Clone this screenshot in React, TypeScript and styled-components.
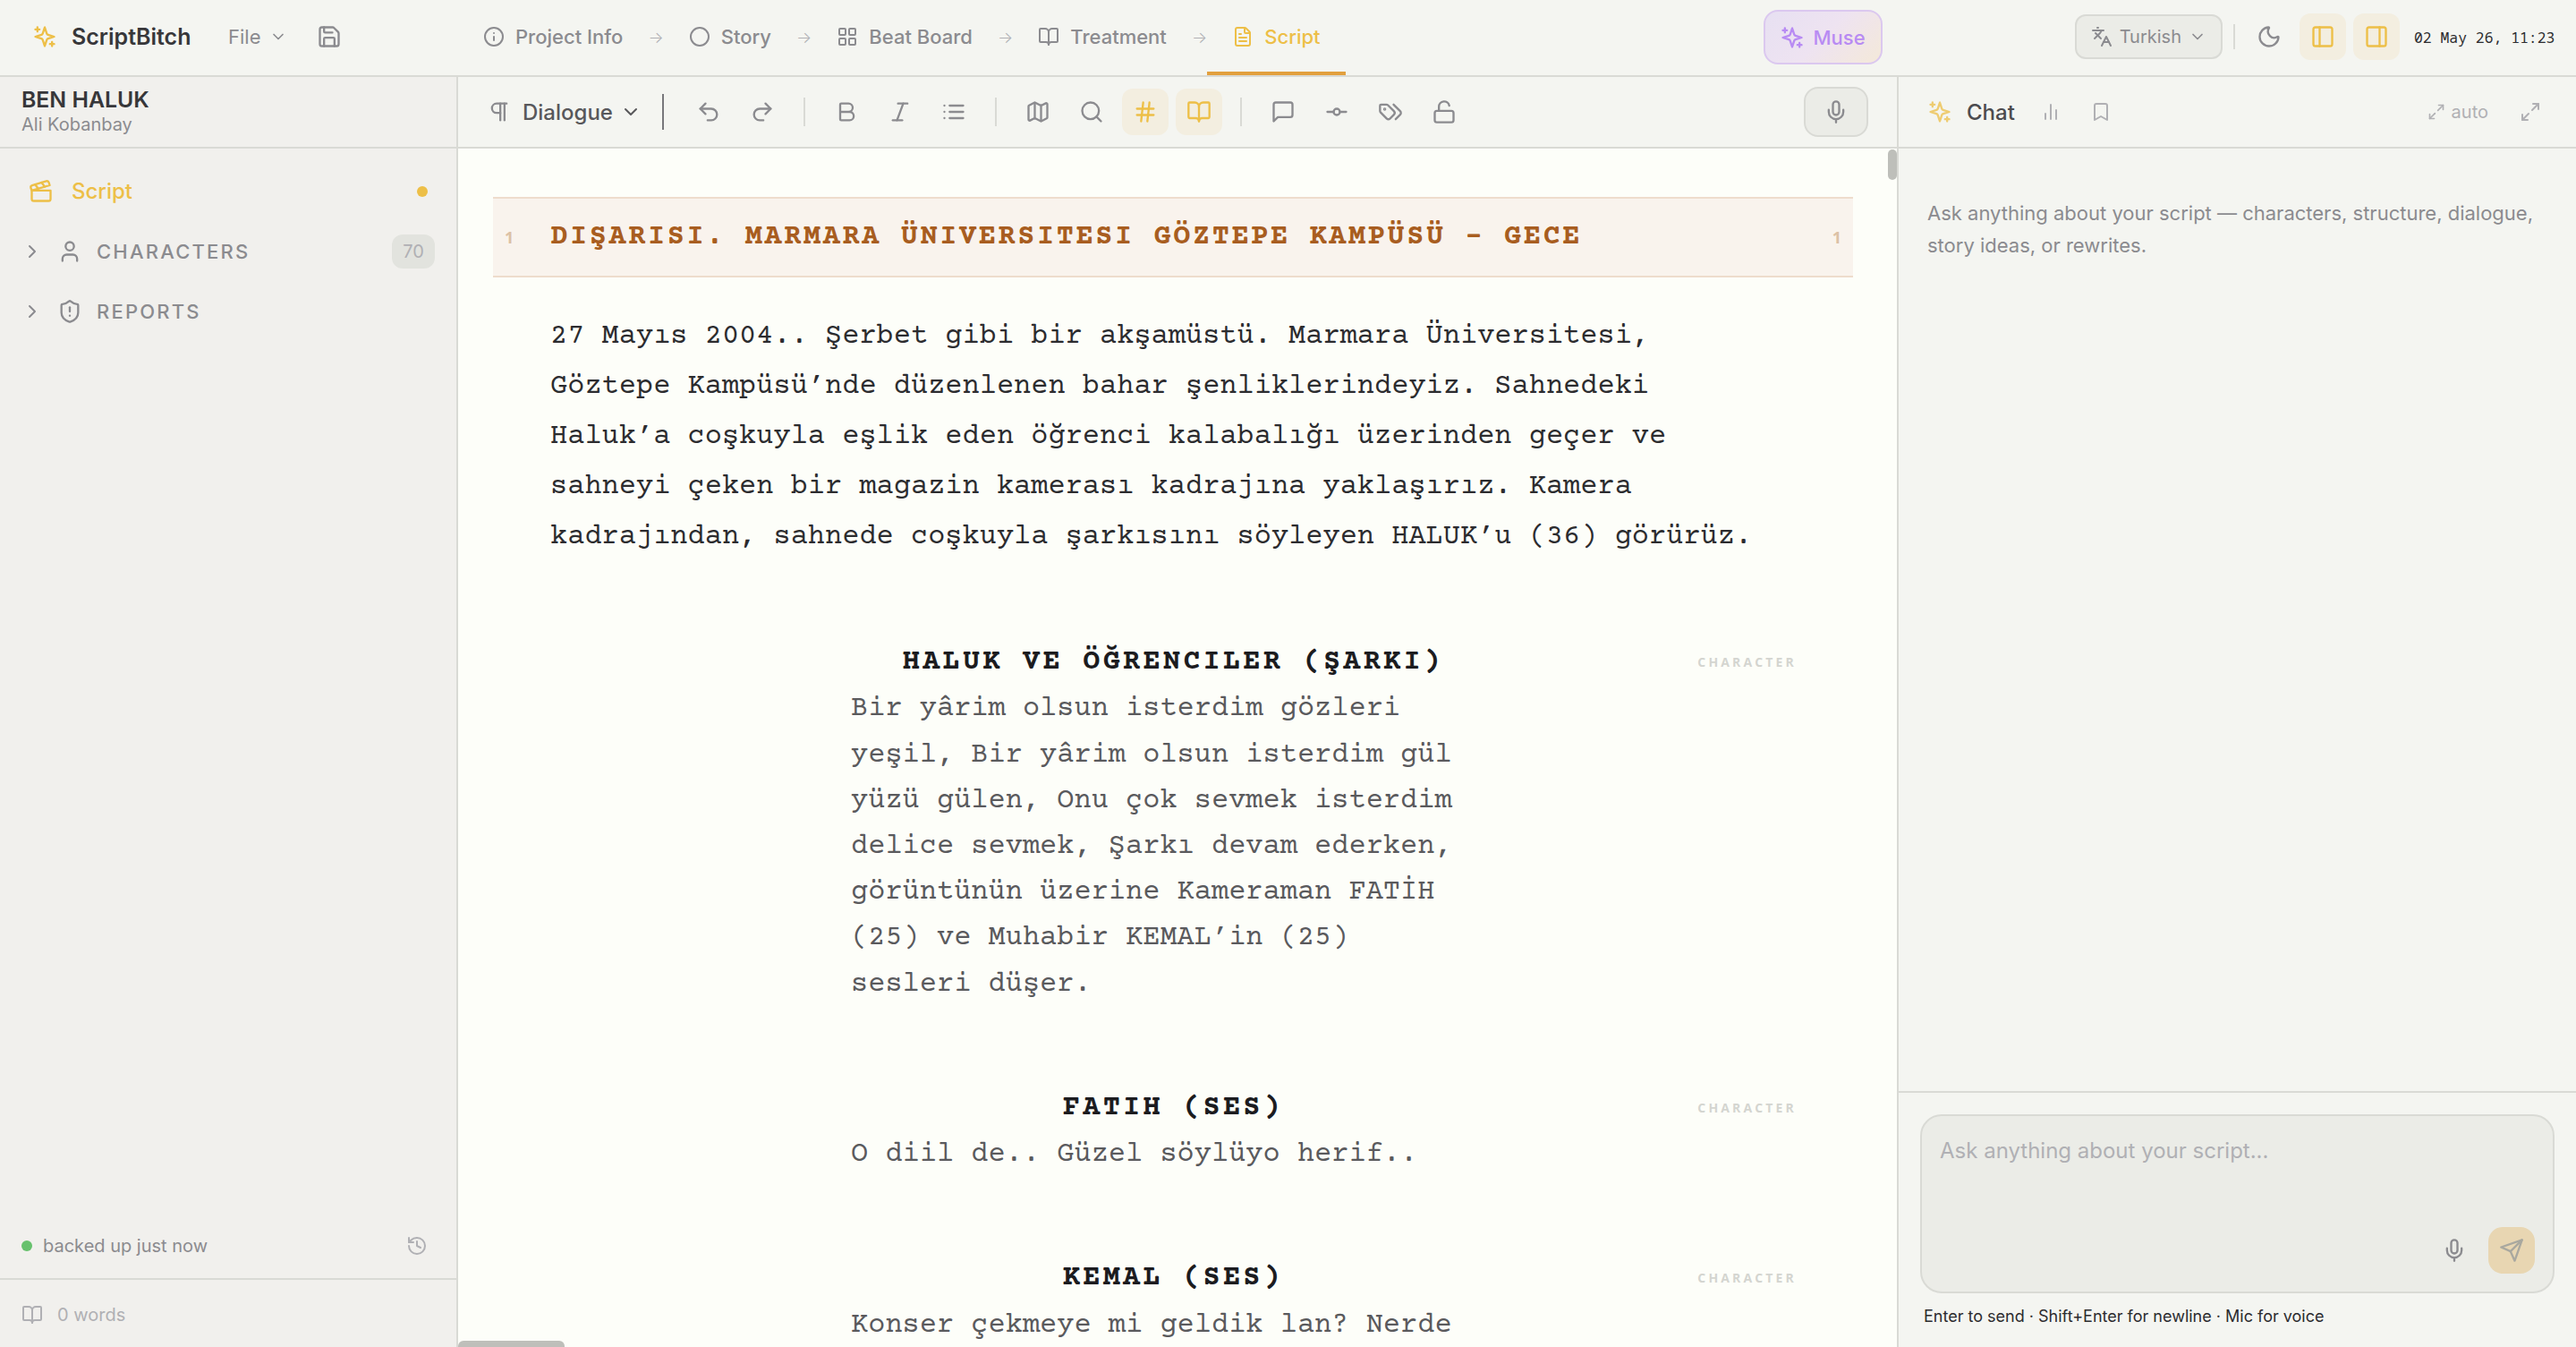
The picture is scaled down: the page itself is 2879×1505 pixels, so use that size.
import React from 'react';
import styled, { createGlobalStyle, css } from 'styled-components';
import {
  BookOpen, Bold, ChevronDown, ChevronRight, Circle, Clapperboard, FileText, Hash, History, Info, Italic,
  Languages, LayoutGrid, LockOpen, Map as MapIcon, Maximize2, Mic, Moon, PanelLeft, PanelRight, Pilcrow,
  Redo2, Save, Search, ShieldAlert, Undo2, User,
} from 'lucide-react';

const c = {
  bar: '#f4f5f1',
  side: '#f1f0ed',
  page: '#fdfef9',
  line: '#d9dad5',
  field: '#ebece7',
  ink: '#37373a',
  mid: '#58585b',
  muted: '#8b8b8f',
  faint: '#b0b0b4',
  gold: '#edbf47',
  goldBg: '#f3eee0',
};

const Global = createGlobalStyle`
  *, *::before, *::after { box-sizing: border-box; }
  html, body { margin: 0; height: 100%; overflow: hidden; }
  body { font-family: Inter, "Open Sans", sans-serif; color: ${c.muted}; background: ${c.bar}; }
  svg { display: block; flex: none; }
`;

/* ---------- icons ---------- */

const Svg = ({ size = 28, children }: { size?: number; children: React.ReactNode }) => (
  <svg width={size} height={size} viewBox="0 0 24 24" fill="none" stroke="currentColor" strokeWidth={2}
    strokeLinecap="round" strokeLinejoin="round">{children}</svg>
);
const Sparkles = ({ size }: { size?: number }) => (
  <Svg size={size}>
    <path d="m12 3-1.912 5.813a2 2 0 0 1-1.275 1.275L3 12l5.813 1.912a2 2 0 0 1 1.275 1.275L12 21l1.912-5.813a2 2 0 0 1 1.275-1.275L21 12l-5.813-1.912a2 2 0 0 1-1.275-1.275L12 3Z" />
    <path d="M5 3v4M19 17v4M3 5h4M17 19h4" />
  </Svg>
);
const ListIcon = () => <Svg><path d="M8 6h13M8 12h13M8 18h13M3 6h.01M3 12h.01M3 18h.01" /></Svg>;
const Comment = () => <Svg><path d="M21 15a2 2 0 0 1-2 2H7l-4 4V5a2 2 0 0 1 2-2h14a2 2 0 0 1 2 2z" /></Svg>;
const Commit = () => <Svg><circle cx="12" cy="12" r="3" /><path d="M3 12h6M15 12h6" /></Svg>;
const TagsIcon = () => (
  <Svg>
    <path d="m15 5 6.3 6.3a2.4 2.4 0 0 1 0 3.4L17 19" />
    <path d="M9.586 5.586A2 2 0 0 0 8.172 5H3a1 1 0 0 0-1 1v5.172a2 2 0 0 0 .586 1.414L8.29 18.29a2.426 2.426 0 0 0 3.42 0l3.58-3.58a2.426 2.426 0 0 0 0-3.42z" />
    <circle cx="6.5" cy="9.5" r=".5" fill="currentColor" />
  </Svg>
);
const Bars = () => <Svg size={24}><path d="M18 20V10M12 20V4M6 20v-6" /></Svg>;
const BookmarkIcon = () => <Svg size={24}><path d="m19 21-7-4-7 4V5a2 2 0 0 1 2-2h10a2 2 0 0 1 2 2v16z" /></Svg>;
const SendIcon = () => <Svg><path d="m22 2-7 20-4-9-9-4Z" /><path d="M22 2 11 13" /></Svg>;

/* ---------- shell ---------- */

const Shell = styled.div`
  width: 100vw;
  height: 100vh;
  display: grid;
  grid-template-rows: 86px minmax(0, 1fr);
  overflow: hidden;
`;
const Body = styled.div`
  display: grid;
  grid-template-columns: 512px minmax(0, 1fr) 759px;
  min-height: 0;
`;

/* ---------- top bar ---------- */

const TopBar = styled.header`
  display: flex;
  align-items: stretch;
  background: ${c.bar};
  border-bottom: 2px solid ${c.line};
  padding-right: 23px;
`;
const BrandArea = styled.div`
  width: 512px;
  display: flex;
  align-items: center;
  padding: 0 36px 2px;
`;
const Brand = styled.div`
  display: flex;
  align-items: center;
  gap: 16px;
  width: 219px;
  font-size: 25px;
  font-weight: 600;
  color: ${c.ink};
  svg { color: ${c.gold}; }
`;
const FileMenu = styled.div`
  display: flex;
  align-items: center;
  gap: 10px;
  width: 99px;
  font-size: 22px;
`;
const Nav = styled.nav`
  display: flex;
  align-items: stretch;
`;
const NavItem = styled.div<{ $active?: boolean }>`
  display: flex;
  align-items: center;
  gap: 12px;
  padding: 2px 28px 0;
  font-size: 22px;
  font-weight: 500;
  color: ${(p) => (p.$active ? c.gold : c.muted)};
  border-bottom: 4px solid ${(p) => (p.$active ? '#e2a03e' : 'transparent')};
`;
const NavArrow = styled.span`
  width: 17.4px;
  display: flex;
  align-items: center;
  justify-content: center;
  padding-bottom: 1px;
  font-size: 18px;
  font-weight: 300;
  color: ${c.faint};
`;
const TopRight = styled.div`
  margin-left: auto;
  display: flex;
  align-items: center;
  padding-bottom: 2px;
`;
const Muse = styled.div`
  display: flex;
  align-items: center;
  align-self: flex-start;
  gap: 10px;
  width: 133px;
  height: 61px;
  margin: 11px 0 0 467px;
  padding: 0 16px;
  border: 2px solid #dbc8ef;
  border-radius: 16px;
  background: linear-gradient(135deg, #e7e0f2 0%, #eee3f1 50%, #f4e9d9 100%);
  color: #b88bf3;
  font-size: 22px;
  font-weight: 500;
`;
const Language = styled.div`
  display: flex;
  align-items: center;
  gap: 8px;
  height: 50px;
  padding: 0 16px;
  border: 2px solid ${c.line};
  border-radius: 12px;
  background: ${c.field};
  font-size: 20px;
`;
const Divider = styled.i<{ $h: number; $m: number; $dark?: boolean }>`
  width: 2px;
  height: ${(p) => p.$h}px;
  margin: 0 ${(p) => p.$m}px;
  background: ${(p) => (p.$dark ? '#77777b' : c.line)};
`;
const Tools = styled.div<{ $first?: boolean }>`
  display: flex;
  align-items: center;
  gap: 8px;
  margin-left: ${(p) => (p.$first ? 24 : 0)}px;
`;
const Tool = styled.span<{ $on?: boolean }>`
  width: 52px;
  height: 52px;
  display: grid;
  place-items: center;
  border-radius: 12px;
  color: ${c.muted};
  ${(p) => p.$on && css`color: ${c.gold}; background: ${c.goldBg};`}
`;
const Clock = styled.time`
  width: 158px;
  margin-left: 16px;
  font-family: Consolas, "Noto Sans Mono", "DejaVu Sans Mono", monospace;
  font-size: 16.4px;
  color: #2c2c2f;
  white-space: pre;
`;

/* ---------- sidebar ---------- */

const Sidebar = styled.aside`
  display: flex;
  flex-direction: column;
  background: ${c.side};
  border-right: 2px solid ${c.line};
  min-height: 0;
`;
const ProjectHead = styled.div`
  height: 80px;
  display: flex;
  flex-direction: column;
  justify-content: center;
  padding: 0 24px;
  border-bottom: 2px solid ${c.line};
  line-height: 28px;
`;
const ProjectTitle = styled.div`
  font-size: 24.8px;
  font-weight: 600;
  color: ${c.ink};
`;
const Author = styled.div`
  font-size: 20px;
`;
const Tree = styled.div`
  flex: 1;
  padding-top: 14px;
`;
const TreeRow = styled.div<{ $active?: boolean }>`
  display: flex;
  align-items: center;
  height: 67.2px;
  gap: 16px;
  padding: 0 24px;
  font-size: 22px;
  font-weight: 500;
  letter-spacing: 0.1em;
  ${(p) => p.$active && css`
    gap: 20px;
    padding: 0 32px;
    font-size: 24px;
    letter-spacing: 0;
    color: ${c.gold};
  `}
`;
const Dot = styled.i<{ $color: string; $end?: boolean }>`
  width: 12px;
  height: 12px;
  border-radius: 50%;
  background: ${(p) => p.$color};
  ${(p) => p.$end && css`margin-left: auto;`}
`;
const Count = styled.span`
  margin-left: auto;
  width: 48px;
  height: 38px;
  display: grid;
  place-items: center;
  border-radius: 12px;
  background: #e2e3de;
  color: ${c.faint};
  font-size: 20px;
  font-weight: 400;
  letter-spacing: 0;
`;
const Backup = styled.div`
  height: 72px;
  display: flex;
  align-items: center;
  gap: 12px;
  padding: 0 32px 0 24px;
  font-size: 20px;
  svg { margin-left: auto; color: ${c.faint}; }
`;
const Words = styled.div`
  height: 77px;
  display: flex;
  align-items: center;
  gap: 16px;
  padding: 3px 24px 0;
  border-top: 2px solid ${c.line};
  font-size: 20px;
  color: ${c.faint};
`;

/* ---------- editor ---------- */

const Editor = styled.main`
  position: relative;
  display: flex;
  flex-direction: column;
  background: ${c.page};
  min-height: 0;
  overflow: hidden;
`;
const Toolbar = styled.div`
  height: 80px;
  flex: none;
  display: flex;
  align-items: center;
  padding: 0 32px;
  background: ${c.bar};
  border-bottom: 2px solid ${c.line};
`;
const BlockType = styled.div`
  display: flex;
  align-items: center;
  width: 196px;
  font-size: 24px;
  font-weight: 500;
  color: ${c.mid};
  svg:first-child { color: ${c.muted}; margin-right: 12px; }
  svg:last-child { margin-left: 8px; }
`;
const MicButton = styled.span`
  width: 72px;
  height: 56px;
  margin-left: auto;
  display: grid;
  place-items: center;
  border: 2px solid ${c.line};
  border-radius: 16px;
  background: ${c.field};
`;
const Page = styled.div`
  flex: none;
  width: 1520px;
  margin: 54px 0 0 39px;
  font-family: "Courier Prime", "Liberation Mono", monospace;
  font-size: 32px;
`;
const Scene = styled.div`
  height: 90px;
  display: flex;
  align-items: baseline;
  padding: 15px 13px;
  border: solid #eedccc;
  border-width: 2px 0;
  background: #f9f3ed;
  line-height: 56px;
  color: #a85d20;
`;
const SceneNo = styled.span`
  font-family: "Open Sans", sans-serif;
  font-size: 18px;
  font-weight: 700;
  line-height: 20px;
  color: #dcc1a6;
`;
const SceneTitle = styled.span`
  flex: 1;
  padding-left: 41px;
  font-weight: 700;
  letter-spacing: 0.08em;
`;
const Action = styled.p`
  width: 1410px;
  margin: 38px 0 0;
  padding: 0 0 0 64px;
  line-height: 56px;
  color: #2c2c2f;
`;
const CharacterRow = styled.div`
  position: relative;
  margin-top: 85px;
  text-align: center;
  font-weight: 700;
  line-height: 54.4px;
  letter-spacing: 0.1em;
  color: #1c1c1f;
`;
const Tag = styled.span`
  position: absolute;
  right: 63px;
  top: 0;
  font-family: "Open Sans", sans-serif;
  font-size: 14px;
  letter-spacing: 3.15px;
  color: #d4d5d0;
`;
const Speech = styled.p`
  margin: 0;
  width: 700px;
  margin-left: 400px;
  line-height: 51.2px;
  color: #5a5a5d;
`;
const ThumbY = styled.i`
  position: absolute;
  top: 81px;
  right: 0;
  width: 10px;
  height: 34px;
  border-radius: 5px;
  background: #bebfba;
`;
const ThumbX = styled.i`
  position: absolute;
  left: 0;
  bottom: -5px;
  width: 119px;
  height: 12px;
  border-radius: 6px;
  background: #bebfba;
`;

/* ---------- chat ---------- */

const Chat = styled.aside`
  display: flex;
  flex-direction: column;
  background: ${c.bar};
  border-left: 2px solid ${c.line};
  min-height: 0;
`;
const ChatHead = styled.div`
  height: 80px;
  display: flex;
  align-items: center;
  padding: 0 39px 0 32px;
  border-bottom: 2px solid ${c.line};
  color: ${c.faint};
`;
const ChatTitle = styled.div`
  display: flex;
  align-items: center;
  gap: 16px;
  margin-right: 28px;
  font-size: 24px;
  font-weight: 500;
  color: #4c4c4f;
  svg { color: ${c.gold}; opacity: 0.75; }
`;
const ChatTabs = styled.div`
  display: flex;
  gap: 32px;
`;
const Auto = styled.div`
  margin: 0 35px 0 auto;
  display: flex;
  align-items: center;
  gap: 7px;
  font-size: 20px;
`;
const Intro = styled.p`
  flex: 1;
  margin: 0;
  padding: 55px 24px 0 32px;
  font-size: 22px;
  line-height: 35.75px;
`;
const Composer = styled.div`
  height: 286px;
  padding: 24px 24px 0;
  border-top: 2px solid ${c.line};
`;
const Input = styled.div`
  height: 200px;
  display: flex;
  flex-direction: column;
  justify-content: space-between;
  padding: 20px;
  border: 2px solid ${c.line};
  border-radius: 24px;
  background: ${c.field};
  font-size: 24px;
  line-height: 38px;
  color: ${c.faint};
`;
const InputActions = styled.div`
  display: flex;
  justify-content: flex-end;
  gap: 12px;
`;
const Send = styled(Tool)`
  border-radius: 16px;
  background: #e8d6b2;
  color: #a9a89f;
`;
const Hint = styled.div`
  padding: 14px 4px 0;
  font-size: 18px;
  line-height: 24px;
  color: #2c2c2f;
`;

/* ---------- data ---------- */

const steps = [
  { label: 'Project Info', Icon: Info },
  { label: 'Story', Icon: Circle },
  { label: 'Beat Board', Icon: LayoutGrid },
  { label: 'Treatment', Icon: BookOpen },
  { label: 'Script', Icon: FileText, active: true },
];

const action = [
  '27 Mayıs 2004.. Şerbet gibi bir akşamüstü. Marmara Üniversitesi,',
  'Göztepe Kampüsü’nde düzenlenen bahar şenliklerindeyiz. Sahnedeki',
  'Haluk’a coşkuyla eşlik eden öğrenci kalabalığı üzerinden geçer ve',
  'sahneyi çeken bir magazin kamerası kadrajına yaklaşırız. Kamera',
  'kadrajından, sahnede coşkuyla şarkısını söyleyen HALUK’u (36) görürüz.',
].join(' ');

const dialogue = [
  {
    who: 'HALUK VE ÖĞRENCILER (ŞARKI)',
    text: 'Bir yârim olsun isterdim gözleri yeşil, Bir yârim olsun isterdim gül yüzü gülen, Onu çok sevmek isterdim delice sevmek, Şarkı devam ederken, görüntünün üzerine Kameraman FATİH (25) ve Muhabir KEMAL’in (25) sesleri düşer.',
  },
  { who: 'FATIH (SES)', text: 'O diil de.. Güzel söylüyo herif..' },
  { who: 'KEMAL (SES)', text: 'Konser çekmeye mi geldik lan? Nerde' },
];

export default function App() {
  return (
    <>
      <Global />
      <Shell>
        <TopBar>
          <BrandArea>
            <Brand><Sparkles />ScriptBitch</Brand>
            <FileMenu>File<ChevronDown size={20} /></FileMenu>
            <Save size={28} />
          </BrandArea>
          <Nav>
            {steps.map(({ label, Icon, active }, i) => (
              <React.Fragment key={label}>
                {i > 0 && <NavArrow>→</NavArrow>}
                <NavItem $active={active}><Icon size={24} />{label}</NavItem>
              </React.Fragment>
            ))}
          </Nav>
          <Muse><Sparkles />Muse</Muse>
          <TopRight>
            <Language><Languages size={24} />Turkish<ChevronDown size={20} /></Language>
            <Divider $h={28} $m={12} />
            <Tools>
              <Tool><Moon size={28} /></Tool>
              <Tool $on><PanelLeft size={28} /></Tool>
              <Tool $on><PanelRight size={28} /></Tool>
            </Tools>
            <Clock>02 May 26, 11:23</Clock>
          </TopRight>
        </TopBar>

        <Body>
          <Sidebar>
            <ProjectHead>
              <ProjectTitle>BEN HALUK</ProjectTitle>
              <Author>Ali Kobanbay</Author>
            </ProjectHead>
            <Tree>
              <TreeRow $active><Clapperboard size={28} />Script<Dot $color={c.gold} $end /></TreeRow>
              <TreeRow><ChevronRight size={24} /><User size={28} />CHARACTERS<Count>70</Count></TreeRow>
              <TreeRow><ChevronRight size={24} /><ShieldAlert size={28} />REPORTS</TreeRow>
            </Tree>
            <Backup><Dot $color="#67c16d" />backed up just now<History size={24} /></Backup>
            <Words><BookOpen size={24} />0 words</Words>
          </Sidebar>

          <Editor>
            <Toolbar>
              <BlockType><Pilcrow size={28} />Dialogue<ChevronDown size={24} /></BlockType>
              <Divider $h={40} $m={0} $dark />
              <Tools $first>
                <Tool><Undo2 size={28} /></Tool>
                <Tool><Redo2 size={28} /></Tool>
              </Tools>
              <Divider $h={32} $m={20} />
              <Tools>
                <Tool><Bold size={28} /></Tool>
                <Tool><Italic size={28} /></Tool>
                <Tool><ListIcon /></Tool>
              </Tools>
              <Divider $h={32} $m={20} />
              <Tools>
                <Tool><MapIcon size={28} /></Tool>
                <Tool><Search size={28} /></Tool>
                <Tool $on><Hash size={28} /></Tool>
                <Tool $on><BookOpen size={28} /></Tool>
              </Tools>
              <Divider $h={32} $m={20} />
              <Tools>
                <Tool><Comment /></Tool>
                <Tool><Commit /></Tool>
                <Tool><TagsIcon /></Tool>
                <Tool><LockOpen size={28} /></Tool>
              </Tools>
              <MicButton><Mic size={28} /></MicButton>
            </Toolbar>
            <Page>
              <Scene>
                <SceneNo>1</SceneNo>
                <SceneTitle>DIŞARISI. MARMARA ÜNIVERSITESI GÖZTEPE KAMPÜSÜ - GECE</SceneTitle>
                <SceneNo>1</SceneNo>
              </Scene>
              <Action>{action}</Action>
              {dialogue.map((d) => (
                <React.Fragment key={d.who}>
                  <CharacterRow>{d.who}<Tag>CHARACTER</Tag></CharacterRow>
                  <Speech>{d.text}</Speech>
                </React.Fragment>
              ))}
            </Page>
            <ThumbY />
            <ThumbX />
          </Editor>

          <Chat>
            <ChatHead>
              <ChatTitle><Sparkles />Chat</ChatTitle>
              <ChatTabs><Bars /><BookmarkIcon /></ChatTabs>
              <Auto><Maximize2 size={20} />auto</Auto>
              <Maximize2 size={24} />
            </ChatHead>
            <Intro>Ask anything about your script — characters, structure, dialogue, story ideas, or rewrites.</Intro>
            <Composer>
              <Input>
                Ask anything about your script...
                <InputActions>
                  <Tool><Mic size={28} /></Tool>
                  <Send><SendIcon /></Send>
                </InputActions>
              </Input>
              <Hint>Enter to send · Shift+Enter for newline · Mic for voice</Hint>
            </Composer>
          </Chat>
        </Body>
      </Shell>
    </>
  );
}
